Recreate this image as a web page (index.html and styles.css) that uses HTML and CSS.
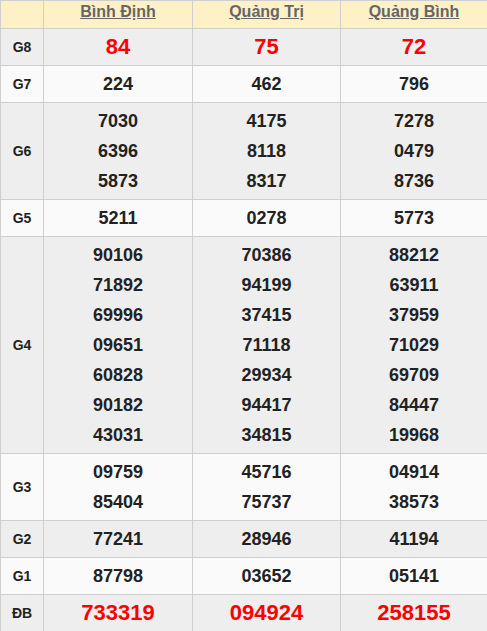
FILE: index.html
```html
<!DOCTYPE html>
<html lang="vi">
<head>
<meta charset="utf-8">
<title>Kết quả xổ số</title>
<link rel="stylesheet" href="styles.css">
</head>
<body>
<table class="kq">
  <colgroup>
    <col class="c-label"><col class="c-p1"><col class="c-p2"><col class="c-p3">
  </colgroup>
  <thead>
    <tr class="head">
      <th></th>
      <th><a href="#">Bình Định</a></th>
      <th><a href="#">Quảng Trị</a></th>
      <th><a href="#">Quảng Bình</a></th>
    </tr>
  </thead>
  <tbody>
    <tr class="odd"><td class="lbl">G8</td><td class="big">84</td><td class="big">75</td><td class="big">72</td></tr>
    <tr class="even"><td class="lbl">G7</td><td>224</td><td>462</td><td>796</td></tr>
    <tr class="odd"><td class="lbl">G6</td>
      <td><div>7030</div><div>6396</div><div>5873</div></td>
      <td><div>4175</div><div>8118</div><div>8317</div></td>
      <td><div>7278</div><div>0479</div><div>8736</div></td></tr>
    <tr class="even"><td class="lbl">G5</td><td>5211</td><td>0278</td><td>5773</td></tr>
    <tr class="odd"><td class="lbl">G4</td>
      <td><div>90106</div><div>71892</div><div>69996</div><div>09651</div><div>60828</div><div>90182</div><div>43031</div></td>
      <td><div>70386</div><div>94199</div><div>37415</div><div>71118</div><div>29934</div><div>94417</div><div>34815</div></td>
      <td><div>88212</div><div>63911</div><div>37959</div><div>71029</div><div>69709</div><div>84447</div><div>19968</div></td></tr>
    <tr class="even"><td class="lbl">G3</td>
      <td><div>09759</div><div>85404</div></td>
      <td><div>45716</div><div>75737</div></td>
      <td><div>04914</div><div>38573</div></td></tr>
    <tr class="odd"><td class="lbl">G2</td><td>77241</td><td>28946</td><td>41194</td></tr>
    <tr class="even"><td class="lbl">G1</td><td>87798</td><td>03652</td><td>05141</td></tr>
    <tr class="odd"><td class="lbl">ĐB</td><td class="big">733319</td><td class="big">094924</td><td class="big">258155</td></tr>
  </tbody>
</table>
</body>
</html>
```

FILE: styles.css
```css
html, body {
  margin: 0;
  padding: 0;
  background: #fff;
}
.kq {
  width: 487px;
  border-collapse: collapse;
  table-layout: fixed;
  font-family: "Liberation Sans", Arial, sans-serif;
  color: #222;
}
.c-label { width: 43px; }
.c-p1 { width: 149px; }
.c-p2 { width: 148px; }
.c-p3 { width: 147px; }
.kq th, .kq td {
  border: 1px solid #cfcfcf;
  text-align: center;
  vertical-align: middle;
  padding: 3px 0;
  font-weight: bold;
  font-size: 18px;
  line-height: 30px;
}
.kq .head th {
  background: #fff1c6;
  height: 27px;
  padding: 0;
  line-height: 22px;
  vertical-align: top;
  font-size: 16px;
}
.kq .head a {
  color: #666;
  text-decoration: underline;
}
.odd td { background: #eeeeee; }
.even td { background: #fafafa; }
.kq td.lbl {
  font-size: 14px;
}
.kq td.big {
  color: #f00;
  font-size: 22px;
}
```
